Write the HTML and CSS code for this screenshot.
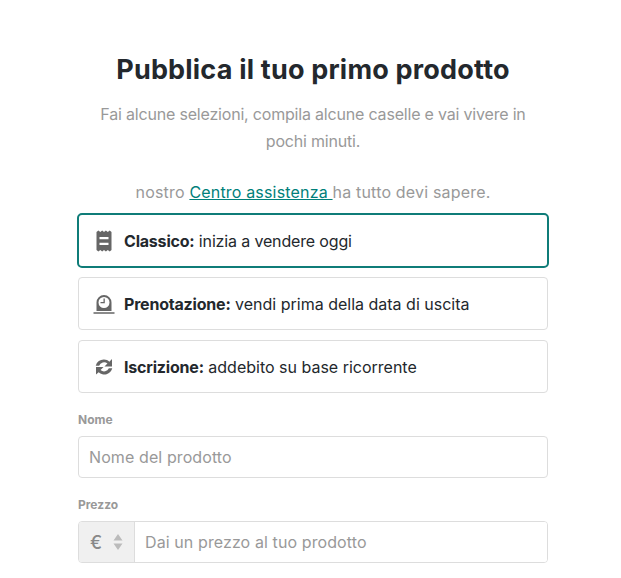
FILE: index.html
```html
<!DOCTYPE html>
<html lang="it">
<head>
<meta charset="utf-8">
<title>Pubblica il tuo primo prodotto</title>
<link rel="stylesheet" href="styles.css">
</head>
<body>
<main class="panel">
  <h1 class="title">Pubblica il tuo primo prodotto</h1>
  <p class="intro">Fai alcune selezioni, compila alcune caselle e vai vivere in pochi minuti.</p>
  <p class="help">nostro <a href="#">Centro assistenza </a>ha tutto devi sapere.</p>
  <div class="options">
    <div class="option selected">
      <svg class="icon" viewBox="0 0 24 24"><path fill="#666" fill-rule="evenodd" d="M4.500 3l1.900-1.500 1.900 1.500 1.900-1.500 1.800 1.500 1.900-1.500 1.900 1.500 1.900-1.500 1.800 1.500v18l-1.800 1.500-1.900-1.500-1.900 1.500-1.900-1.500-1.800 1.500-1.900-1.500-1.900 1.500-1.900-1.500zM7.500 8v2.300h9V8zM7.500 13.700V16h9v-2.300z"/></svg>
      <span><b>Classico:</b> inizia a vendere oggi</span>
    </div>
    <div class="option">
      <svg class="icon" viewBox="0 0 24 24"><path fill="#666" fill-rule="evenodd" d="M12 3a7.500 7.500 0 0 0-7.500 7.500V19h15v-8.500A7.500 7.500 0 0 0 12 3zm0 2a5.500 5.500 0 1 1 0 11 5.500 5.500 0 0 1 0-11z"/><path fill="#666" d="M11.500 6.500h1.300v4.700H8.500v-1.300h3zM1.500 20.300h21v1.500h-21z"/></svg>
      <span><b>Prenotazione:</b> vendi prima della data di uscita</span>
    </div>
    <div class="option">
      <svg class="icon" viewBox="-1.500 -1.500 27 27"><path fill="#666" d="M12 3.500c2.400 0 4.500.9 6 2.500l3-3v8.500h-8.500l3.400-3.400A6 6 0 0 0 6.500 10.500H2.700A9.300 9.300 0 0 1 12 3.500zM3 20.500V12h8.500l-3.400 3.400a6 6 0 0 0 9.400-1.900h3.800A9.300 9.300 0 0 1 6 18z"/></svg>
      <span><b>Iscrizione:</b> addebito su base ricorrente</span>
    </div>
  </div>
  <label class="label" for="nome">Nome</label>
  <input class="field" id="nome" type="text" placeholder="Nome del prodotto">
  <label class="label price-label" for="prezzo">Prezzo</label>
  <div class="price">
    <div class="currency">
      <span class="euro">€</span>
      <svg class="updown" viewBox="0 0 10 16"><path fill="#bbb" d="M5 0l4.500 6.500h-9zM5 16l-4.500-6.500h9z"/></svg>
    </div>
    <input class="price-input" id="prezzo" type="text" placeholder="Dai un prezzo al tuo prodotto">
  </div>
</main>
</body>
</html>
```
FILE: styles.css
```css
* { box-sizing: border-box; }
html, body { height: 100%; overflow: hidden; }
body {
  margin: 0;
  background: #fff;
  font-family: "Inter", "Liberation Sans", sans-serif;
  color: #23282d;
}
.panel {
  width: 470px;
  margin-left: 78px;
  padding-top: 52px;
  text-align: center;
}
.title {
  margin: 0 0 13px;
  font-size: 27px;
  line-height: 36px;
  font-weight: 700;
  letter-spacing: 0.2px;
}
.intro, .help {
  margin: 0;
  font-size: 16px;
  line-height: 27px;
  color: #999;
}
.intro { padding: 0 20px; letter-spacing: -0.19px; }
.help { margin-top: 24px; letter-spacing: 0.18px; }
.help a { color: #00807a; }
.options {
  display: flex;
  flex-direction: column;
  gap: 10px;
  margin-top: 7px;
}
.option {
  display: flex;
  align-items: center;
  gap: 8px;
  height: 53px;
  padding: 0 13px;
  border: 1px solid #ddd;
  border-radius: 4px;
  font-size: 16px;
  text-align: left;
}
.option b { letter-spacing: -0.2px; }
.option.selected {
  height: 55px;
  margin: 0 -1px -1px;
  border: 2px solid #0f7c78;
  border-radius: 5px;
  letter-spacing: -0.15px;
}
.icon { width: 24px; height: 24px; flex: none; }
.label {
  display: block;
  margin-top: 20px;
  font-size: 12px;
  line-height: 14px;
  font-weight: 700;
  color: #999;
  text-align: left;
}
.price-label { margin-top: 20px; }
.field, .price { margin-top: 9px; }
.field, .price-input {
  font: inherit;
  font-size: 16px;
  letter-spacing: 0.1px;
  color: #23282d;
  outline: none;
}
.field::placeholder, .price-input::placeholder { color: #999; opacity: 1; }
.field {
  display: block;
  width: 100%;
  height: 42px;
  padding: 0 10px;
  border: 1px solid #ddd;
  border-radius: 4px;
}
.price {
  display: flex;
  height: 42px;
  border: 1px solid #ddd;
  border-radius: 4px;
  overflow: hidden;
}
.currency {
  display: flex;
  align-items: center;
  gap: 11px;
  width: 56px;
  flex: none;
  padding-left: 11px;
  background: #f0f0f0;
  border-right: 1px solid #ddd;
}
.euro { font-size: 18px; font-weight: 500; color: #888; }
.updown { width: 10px; height: 16px; }
.price-input {
  flex: 1;
  min-width: 0;
  padding: 0 10px;
  border: 0;
}
```
